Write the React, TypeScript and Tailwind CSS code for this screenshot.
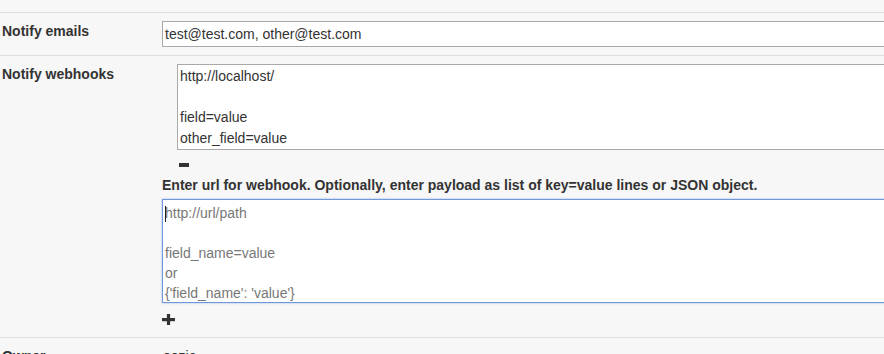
export default function App() {
  const font = { fontFamily: '"Liberation Sans", Arial, sans-serif' }
  return (
    <div className="w-[884px] h-[354px] overflow-hidden bg-[#f7f7f7] text-[#333] text-[14px]" style={font}>
      <div className="h-[12px]" />
      <div className="flex border-t border-[#ddd] pt-[8px] pb-[8px]">
        <div className="w-[162px] pl-[2px] font-bold leading-[20px] shrink-0">Notify emails</div>
        <div className="h-[26px] w-[760px] shrink-0 border border-[#a9a9a9] bg-white pl-[2px] leading-[24px]">
          test@test.com, other@test.com
        </div>
      </div>
      <div className="flex border-t border-[#ddd] pt-[8px] pb-[8px]">
        <div className="w-[162px] pl-[2px] font-bold leading-[20px] shrink-0">Notify webhooks</div>
        <div className="flex flex-col shrink-0">
          <div className="pl-[15px]">
            <div className="h-[86px] w-[760px] border border-[#a9a9a9] bg-white pl-[2px] pt-[1px] leading-[20.5px]">
              <div>http://localhost/</div>
              <div>&nbsp;</div>
              <div>field=value</div>
              <div>other_field=value</div>
            </div>
            <div className="pl-[2px] pt-[13px] h-[25px]">
              <div className="w-[10px] h-[4px] bg-[#333]" />
            </div>
          </div>
          <div className="font-bold leading-[20px] h-[24px]">
            Enter url for webhook. Optionally, enter payload as list of key=value lines or JSON object.
          </div>
          <div className="relative h-[104px] w-[760px] border border-[#6f98d9] bg-white pl-[2px] pt-[3px] leading-[20px] text-[#777] shadow-[0_0_2px_#9ab8e8]">
            <div className="absolute left-[2px] top-[6px] w-px h-[16px] bg-[#222]" />
            <div>http://url/path</div>
            <div>&nbsp;</div>
            <div>field_name=value</div>
            <div>or</div>
            <div>{"{'field_name': 'value'}"}</div>
          </div>
          <div className="pt-[11px] h-[26px]">
            <svg width="13" height="11" viewBox="0 0 13 11" className="block">
              <rect x="0" y="4" width="13" height="3.2" fill="#333" />
              <rect x="4.9" y="0" width="3.2" height="11" fill="#333" />
            </svg>
          </div>
        </div>
      </div>
      <div className="flex border-t border-[#ddd] pt-[8px]">
        <div className="w-[162px] pl-[2px] font-bold leading-[20px] shrink-0">Owner</div>
        <div className="pl-[1px] leading-[20px]">oozie</div>
      </div>
    </div>
  )
}
